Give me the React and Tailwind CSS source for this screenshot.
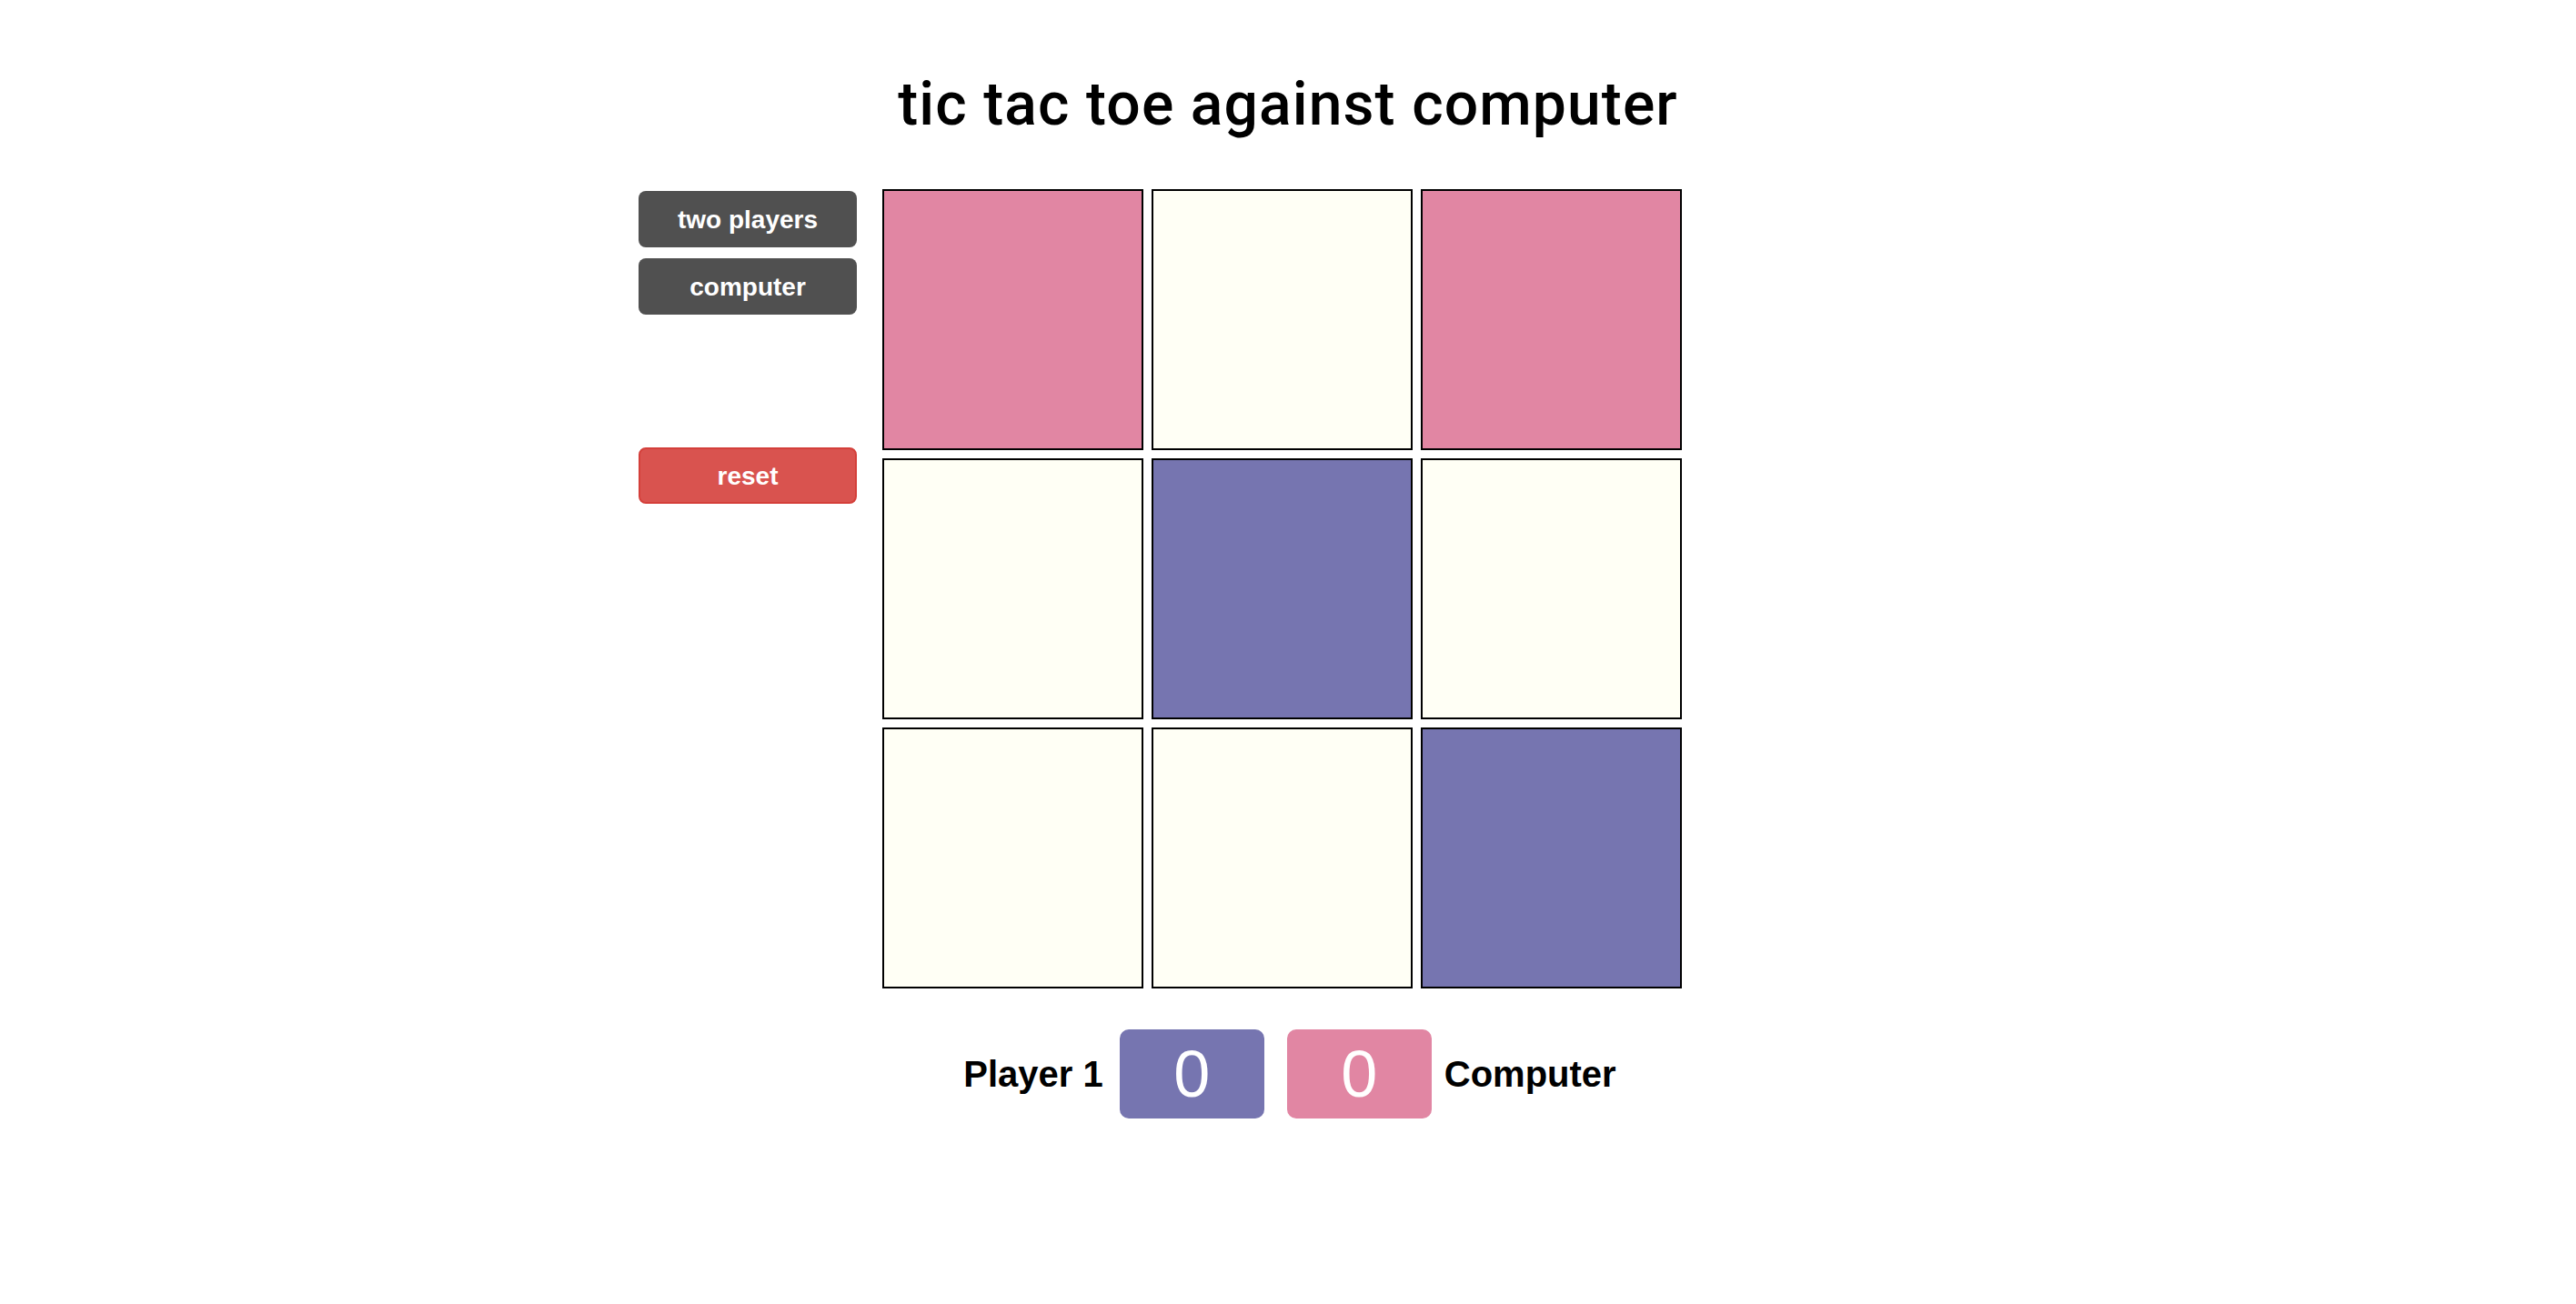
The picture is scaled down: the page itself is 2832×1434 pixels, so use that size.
import React from 'react';

const PINK = 'bg-[#e186a3]';
const PURPLE = 'bg-[#7675b0]';
const EMPTY = 'bg-[#fffff5]';

const board = [
    PINK, EMPTY, PINK,
    EMPTY, PURPLE, EMPTY,
    EMPTY, EMPTY, PURPLE,
];

const App = () => {
    return (
        <div className="min-h-screen bg-white flex flex-col items-center font-['Liberation_Sans',Arial,sans-serif]">
            {/* Title */}
            <h1 className="mt-[82px] text-[66px] leading-none font-medium text-black tracking-[1.1px] font-['Roboto','Liberation_Sans',sans-serif]">
                tic tac toe against computer
            </h1>

            {/* Controls + board */}
            <div className="w-full grid grid-cols-[1fr_auto_1fr] pr-[13px] mt-[60px]">
                <div className="flex justify-end">
                    <div className="w-[240px] mr-[28px] pt-[2px] flex flex-col">
                        <button className="h-[62px] pt-[2px] rounded-[8px] bg-[#505050] text-white text-[28px] font-bold">
                            two players
                        </button>
                        <button className="h-[62px] pt-[2px] mt-[12px] rounded-[8px] bg-[#505050] text-white text-[28px] font-bold">
                            computer
                        </button>
                        <button className="h-[62px] pt-[2px] mt-[146px] rounded-[8px] bg-[#d9534f] border-2 border-[#d43f3a] text-white text-[28px] font-bold">
                            reset
                        </button>
                    </div>
                </div>

                <div className="grid grid-cols-3 gap-[9px]">
                    {board.map((color, i) => (
                        <div key={i} className={`w-[287px] h-[287px] border-2 border-black ${color}`} />
                    ))}
                </div>

                <div />
            </div>

            {/* Score */}
            <div className="flex items-center justify-center mt-[45px] pl-[4px]">
                <span className="text-[40px] font-bold text-black">Player 1</span>
                <div className="ml-[18px] w-[159px] h-[98px] rounded-[10px] bg-[#7675b0] flex items-center justify-center">
                    <span className="text-[72px] leading-none text-white">0</span>
                </div>
                <div className="ml-[25px] w-[159px] h-[98px] rounded-[10px] bg-[#e186a3] flex items-center justify-center">
                    <span className="text-[72px] leading-none text-white">0</span>
                </div>
                <span className="ml-[14px] text-[40px] font-bold text-black">Computer</span>
            </div>
        </div>
    );
};

export default App;
